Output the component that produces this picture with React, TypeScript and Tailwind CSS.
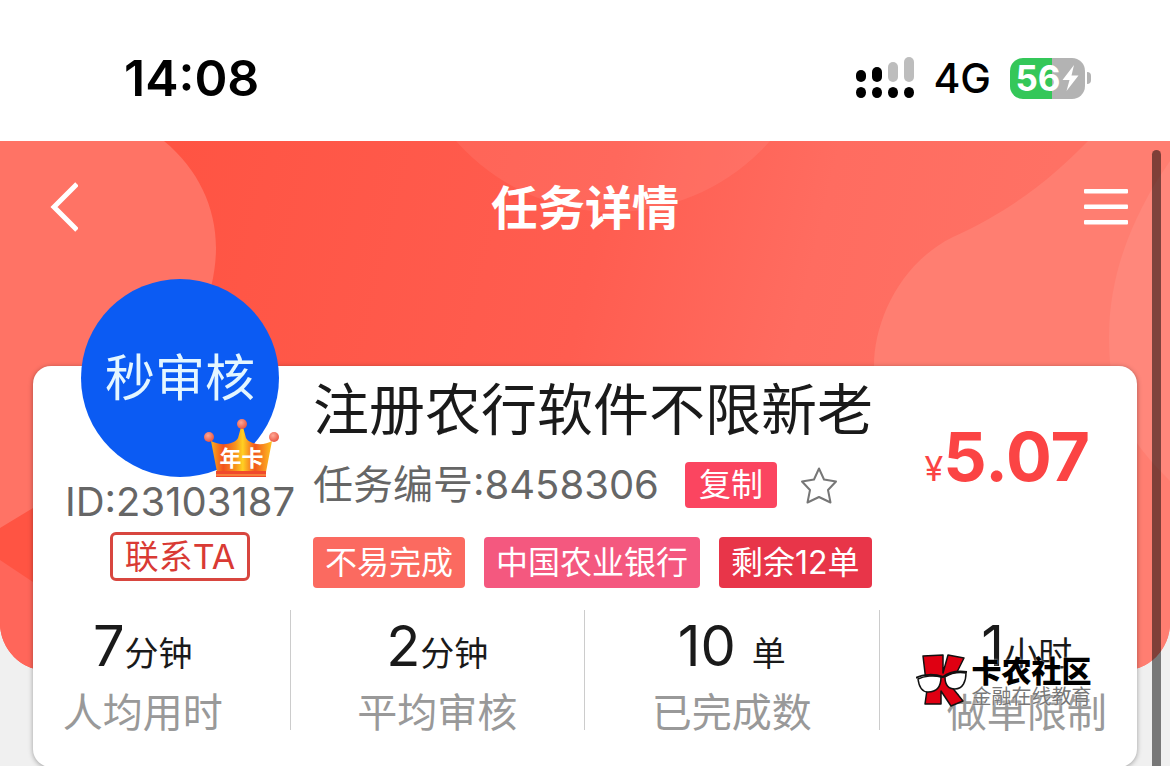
import { type ReactNode } from 'react'
import clsx from 'clsx'

const tags = [
  { label: '不易完成', color: 'bg-[#fb6a60]' },
  { label: '中国农业银行', color: 'bg-[#f4587f]' },
  { label: '剩余12单', color: 'bg-[#e83549]' },
]

const stats = [
  { value: '7', unit: '分钟', label: '人均用时' },
  { value: '2', unit: '分钟', label: '平均审核' },
  { value: '10 ', unit: '单', label: '已完成数' },
  { value: '1', unit: '小时', label: '做单限制' },
]

function SignalIcon() {
  return (
    <svg width="60" height="42" viewBox="0 0 60 42" aria-hidden="true">
      <rect x="1" y="13" width="10" height="12" rx="5" />
      <rect x="17" y="10" width="10" height="15" rx="5" />
      <rect x="33" y="5" width="10" height="20" rx="5" fill="#bdbdbd" />
      <rect x="49" y="0" width="10" height="25" rx="5" fill="#bdbdbd" />
      {[6, 22, 38, 54].map((cx) => (
        <ellipse key={cx} cx={cx} cy="35.5" rx="5" ry="5.5" />
      ))}
    </svg>
  )
}

function Battery() {
  return (
    <div className="flex items-center gap-[2px]">
      <div className="flex h-[41px] w-[75px] items-center justify-center rounded-[13px] bg-[linear-gradient(90deg,#34c759_56%,#b3b3b3_56%)] text-white">
        <span className="text-[35px] leading-none font-bold">56</span>
        <svg width="19" height="26" viewBox="0 0 17 26" fill="currentColor" aria-hidden="true">
          <path d="M12 0 0.5 15h7L4.5 26 16.500 10.500H9.500Z" />
        </svg>
      </div>
      <div className="h-3 w-1 rounded-r-full bg-[#b3b3b3]" />
    </div>
  )
}

function StatusBar() {
  return (
    <div className="flex h-[141px] items-center justify-between bg-white pt-4 pr-[79px] pb-[1px] pl-[124px] text-black">
      <span className="text-[50px] leading-none font-semibold">14:08</span>
      <div className="flex items-center">
        <SignalIcon />
        <span className="mr-[19px] ml-[18px] text-[41px] leading-none font-medium">4G</span>
        <Battery />
      </div>
    </div>
  )
}

function HeroBackground() {
  return (
    <div className="absolute inset-x-0 top-0 h-[530px] overflow-hidden rounded-b-[48px]">
      <svg
        className="h-full w-full"
        viewBox="0 0 1170 530"
        preserveAspectRatio="none"
        aria-hidden="true"
      >
        <defs>
          <linearGradient id="base" x1="0.15" y1="0" x2="0.9" y2="0.08">
            <stop offset="0" stopColor="#ff5443" />
            <stop offset="0.5" stopColor="#ff5d50" />
            <stop offset="0.75" stopColor="#ff6c60" />
            <stop offset="1" stopColor="#ff7164" />
          </linearGradient>
        </defs>
        <rect width="1170" height="530" fill="url(#base)" />
        <path
          d="M0 0H164C198 28 216 66 216 107C216 190 140 310 33 367L0 387Z"
          fill="#ff7365"
        />
        <path d="M0 419 33 441 300 530H0Z" fill="#ff665a" />
        <circle cx="613" cy="-138" r="209" fill="#fff" fillOpacity="0.07" />
        <path
          d="M1088 0C1055 34 1015 68 953 96C900 122 874 180 874 225C874 360 1000 460 1060 530H1170V0Z"
          fill="#ff7e71"
        />
        <path
          d="M1170 20C1135 70 1109 130 1109 195C1109 270 1130 300 1170 340Z"
          fill="#ff877b"
        />
      </svg>
    </div>
  )
}

function NavBar() {
  return (
    <header className="relative flex h-[132px] items-center justify-between pr-[42px] pl-[50px] text-white">
      <button type="button" aria-label="返回">
        <svg width="28" height="50" viewBox="0 0 28 50" fill="none" aria-hidden="true">
          <path d="M27 2 4 25 27 48" stroke="currentColor" strokeWidth="5" />
        </svg>
      </button>
      <h1 className="absolute inset-x-0 mx-auto w-fit text-[47px] leading-none font-bold">
        任务详情
      </h1>
      <button type="button" aria-label="菜单">
        <svg width="44" height="36" viewBox="0 0 44 36" fill="currentColor" aria-hidden="true">
          <rect width="44" height="4.500" rx="1" />
          <rect y="15.500" width="44" height="4.500" rx="1" />
          <rect y="31" width="44" height="4.500" rx="1" />
        </svg>
      </button>
    </header>
  )
}

function CrownBadge() {
  return (
    <div className="absolute right-0 bottom-0 h-[58px] w-[75px]">
      <svg width="75" height="58" viewBox="0 0 75 58" aria-hidden="true">
        <defs>
          <linearGradient id="crown" x1="0" x2="1" y1="0" y2="0">
            <stop offset="0" stopColor="#fbb01c" />
            <stop offset="0.2" stopColor="#f2501f" />
            <stop offset="0.4" stopColor="#f7941d" />
            <stop offset="0.52" stopColor="#ffd022" />
            <stop offset="0.72" stopColor="#f2561f" />
            <stop offset="1" stopColor="#ffc41f" />
          </linearGradient>
          <radialGradient id="bead" cx="0.4" cy="0.35" r="0.7">
            <stop offset="0" stopColor="#ffa896" />
            <stop offset="1" stopColor="#e8503c" />
          </radialGradient>
        </defs>
        <path
          d="M7 22C16 27 30 26 34 19L37 8H39L42 19C46 26 60 27 68 22L62 53H13Z"
          fill="url(#crown)"
        />
        <path d="M12 52H62V58H12Z" fill="#f04a2c" />
        <path d="M12 56H62" stroke="#ffb04a" strokeWidth="1" />
        <circle cx="5" cy="18" r="5" fill="url(#bead)" />
        <circle cx="38" cy="5" r="5" fill="url(#bead)" />
        <circle cx="70" cy="18" r="5" fill="url(#bead)" />
      </svg>
      <span className="absolute inset-x-0 bottom-2 text-center text-[22px] leading-none font-bold text-white">
        年卡
      </span>
    </div>
  )
}

function Publisher() {
  return (
    <div className="-mt-[87px] flex w-[234px] shrink-0 flex-col items-center">
      <div className="relative flex size-[198px] items-center justify-center rounded-full bg-[#0b5bf3]">
        <span className="text-[50px] leading-none text-[#e4f6ff]">秒审核</span>
        <CrownBadge />
      </div>
      <p className="mt-[1px] text-[40px] leading-[48px] whitespace-nowrap text-[#666]">
        ID:23103187
      </p>
      <button
        type="button"
        className="mt-1.5 h-[49px] rounded-md border-[3px] border-[#d8463f] px-3 text-[34px] leading-none text-[#d93a34]"
      >
        联系TA
      </button>
    </div>
  )
}

function StarIcon() {
  return (
    <svg
      width="38"
      height="37"
      viewBox="0 0 38 37"
      fill="none"
      stroke="#777"
      strokeWidth="2"
      strokeLinejoin="round"
      aria-hidden="true"
    >
      <path d="M19 1.500 24 12.500 36 14.500 28 23 30.500 35.500 19 30 7.500 35.500 10 23 2 14.500 14 12.500Z" />
    </svg>
  )
}

function TaskInfo() {
  return (
    <div className="min-w-0 pt-2">
      <h2 className="text-[56px] leading-[72px] whitespace-nowrap text-[#1a1a1a]">
        注册农行软件不限新老
      </h2>
      <div className="mt-4 flex h-[46px] items-center whitespace-nowrap">
        <span className="text-[40px] leading-none text-[#666]">任务编号:8458306</span>
        <button
          type="button"
          className="ml-[26px] h-[46px] rounded bg-[#fb4560] px-[14px] text-[32px] leading-none text-white"
        >
          复制
        </button>
        <button type="button" aria-label="收藏" className="ml-[23px]">
          <StarIcon />
        </button>
      </div>
      <div className="mt-[29px] flex gap-[19px]">
        {tags.map((tag) => (
          <span
            key={tag.label}
            className={clsx(
              'h-[51px] rounded px-3 text-[32px] leading-[52px] whitespace-nowrap text-white',
              tag.color
            )}
          >
            {tag.label}
          </span>
        ))}
      </div>
    </div>
  )
}

function Stat({ value, unit, label, children }: {
  value: string
  unit: string
  label: string
  children?: ReactNode
}) {
  return (
    <div className="relative h-[120px] border-r border-[#ccc] text-center whitespace-nowrap last:border-r-0">
      <dd className="h-[72px] text-[34px] leading-[72px] whitespace-pre text-[#1a1a1a]">
        <span className="text-[56px]">{value}</span>
        {unit}
      </dd>
      <dt className="mt-[11px] text-[40px] leading-10 text-[#999]">{label}</dt>
      {children}
    </div>
  )
}

function CommunityMark() {
  return (
    <div className="absolute top-11 left-9 flex items-start gap-1">
      <svg width="52" height="54" viewBox="-1 0 52 54" aria-hidden="true">
        <g stroke="#111" strokeWidth="1.500" strokeLinejoin="round">
          <path
            d="M6 2 26 1V19L31 1 47 4 38 22 34 32 46 47 34 52 24 37V50L8 50 10 36Z"
            fill="#df0012"
          />
          <path
            d="M1 25C7 22 17 21 24 23 24 32 20 38 11 38 5 38 2 33 1 25Z"
            fill="#fff"
          />
          <path
            d="M28 23C34 19 42 18 49 19 49 27 46 35 38 35 32 35 28 31 28 23Z"
            fill="#fff"
          />
        </g>
        <path
          d="M-1 24C6 20 18 20 26 23 33 17 42 17 50 18"
          fill="none"
          stroke="#111"
          strokeWidth="2"
        />
      </svg>
      <div className="text-left">
        <p className="text-[30px] leading-[34px] font-black text-black [text-shadow:0_0_2px_#fff]">
          卡农社区
        </p>
        <p className="text-[20px] leading-[18px] text-[#777] [text-shadow:0_0_2px_#fff]">
          金融在线教育
        </p>
      </div>
    </div>
  )
}

export default function App() {
  return (
    <div className="relative flex min-h-screen flex-col overflow-x-hidden bg-[#f0f0f0] font-['Inter','Noto_Sans_CJK_SC',sans-serif]">
      <StatusBar />
      <main className="relative flex-1">
        <HeroBackground />
        <NavBar />
        <section className="relative mx-[33px] mt-[93px] rounded-[18px] bg-white pb-[37px] shadow-[0_1px_5px_rgba(0,0,0,0.35)]">
          <div className="flex gap-4 pr-[47px] pl-[30px]">
            <Publisher />
            <TaskInfo />
            <p className="mt-[50px] ml-auto h-20 text-[34px] leading-[80px] whitespace-nowrap text-[#fb4444]">
              ¥<strong className="text-[68px] font-bold">5.07</strong>
            </p>
          </div>
          <dl className="-mx-[37px] mt-[22px] grid grid-cols-4">
            {stats.map((stat, i) => (
              <Stat key={stat.label} {...stat}>
                {i === stats.length - 1 && <CommunityMark />}
              </Stat>
            ))}
          </dl>
        </section>
        {/* scroll indicator */}
        <div className="absolute top-[9px] right-[9px] bottom-0 w-[9px] rounded-t-full bg-black/50" />
      </main>
    </div>
  )
}
